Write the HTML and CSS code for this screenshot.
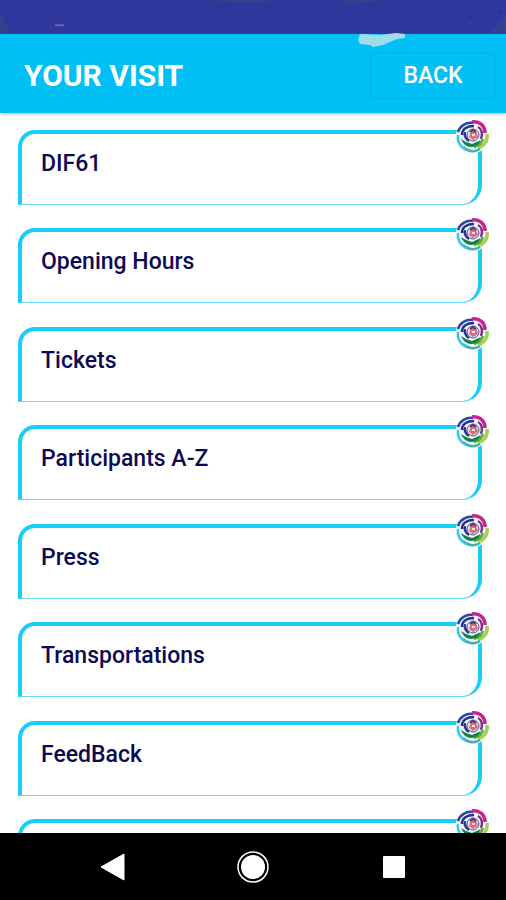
FILE: index.html
```html
<!DOCTYPE html>
<html lang="en">
<head>
<meta charset="utf-8">
<meta name="viewport" content="width=device-width, initial-scale=1">
<title>Your Visit</title>
<link rel="stylesheet" href="styles.css">
</head>
<body>
<svg class="symbols" aria-hidden="true">
  <symbol id="rose" viewBox="0 0 36 36">
    <circle cx="18" cy="18" r="16.500" fill="#f1f8fc"/>
    <g fill="none" stroke-width="2.500">
      <path d="M4 13C6 7 12 3 19 4" stroke="#2b4aa0"/>
      <path d="M18 3C25 2 31 6 31 14" stroke="#c8238f" stroke-width="3.500"/>
      <path d="M33 15C34 22 30 27 24 29" stroke="#a3d04e" stroke-width="3.500"/>
      <path d="M26 30C20 34 13 32 9 28" stroke="#45b0ab"/>
      <path d="M4 16C3 22 6 28 12 31" stroke="#38c8ef"/>
      <path d="M8 16C8 10 13 7 20 7" stroke="#25308f"/>
      <path d="M24 8C28 10 29 15 27 20" stroke="#80307f"/>
      <path d="M29 20C28 24 24 27 20 28" stroke="#5aa93a"/>
      <path d="M11 13C10 17 12 20 15 22" stroke="#313494"/>
    </g>
    <path d="M7 20L12 23 18 25 27 21C25 26 21 28 17 28S9 25 7 20Z" fill="#147f48"/>
    <circle cx="19" cy="16" r="6" fill="#dfe3f0" stroke="#535294" stroke-width="1"/>
    <path d="M15 18L17 12 22 12 24 18 19 21Z" fill="#dc6f78"/>
    <path d="M16 13L19 11 22 13" fill="none" stroke="#50356c" stroke-width="2"/>
    <path d="M18 16H21" stroke="#f5e9e7" stroke-width="2"/>
  </symbol>
</svg>
<div class="screen">
  <div class="status">
    <svg class="status-art" viewBox="0 0 506 34" preserveAspectRatio="none" aria-hidden="true">
      <path d="M0 12L10 34H0ZM200 0H280L250 3ZM340 0H386L345 5ZM506 15V34H490Z" fill="#35408f"/>
      <path d="M55 26H64" stroke="#65699f" stroke-width="2"/>
      <path d="M468 17H472M498 14L501 12" stroke="#283080" stroke-width="2"/>
    </svg>
  </div>
  <header class="bar">
    <svg class="smudge" viewBox="0 0 48 15" aria-hidden="true">
      <path d="M2 1L22 2 38 0 47 1V5L39 6 25 12 15 14 12 12 2 11 0 7Z" fill="#9edcec"/>
    </svg>
    <h1>YOUR VISIT</h1>
    <button class="back" type="button">BACK</button>
  </header>
  <main>
    <ul class="list">
      <li><a class="card" href="#dif61">DIF61<svg class="rose" aria-hidden="true"><use href="#rose"/></svg></a></li>
      <li><a class="card" href="#hours">Opening Hours<svg class="rose" aria-hidden="true"><use href="#rose"/></svg></a></li>
      <li><a class="card" href="#tickets">Tickets<svg class="rose" aria-hidden="true"><use href="#rose"/></svg></a></li>
      <li><a class="card" href="#participants">Participants A-Z<svg class="rose" aria-hidden="true"><use href="#rose"/></svg></a></li>
      <li><a class="card" href="#press">Press<svg class="rose" aria-hidden="true"><use href="#rose"/></svg></a></li>
      <li><a class="card" href="#transportations">Transportations<svg class="rose" aria-hidden="true"><use href="#rose"/></svg></a></li>
      <li><a class="card" href="#feedback">FeedBack<svg class="rose" aria-hidden="true"><use href="#rose"/></svg></a></li>
      <li class="peek"><div class="card"><svg class="rose" aria-hidden="true"><use href="#rose"/></svg></div></li>
    </ul>
  </main>
  <nav class="keys" aria-label="System">
    <button type="button" aria-label="Back"><svg viewBox="0 0 36 36"><path d="M6 18L29 5V31Z" fill="#fff" stroke="#fff" stroke-linejoin="round"/></svg></button>
    <button type="button" aria-label="Home"><svg viewBox="0 0 36 36"><circle cx="18" cy="18" r="15" fill="none" stroke="#fff" stroke-width="1.5"/><circle cx="18" cy="18" r="12" fill="#fff"/></svg></button>
    <button type="button" aria-label="Recent apps"><svg viewBox="0 0 36 36"><rect x="7" y="7" width="22" height="22" rx="1" fill="#fff"/></svg></button>
  </nav>
</div>
</body>
</html>
```
FILE: styles.css
```css
* {
  box-sizing: border-box;
}

body {
  margin: 0;
  background: #fff;
  color: #0d0a55;
  font-family: Roboto, "Liberation Sans", sans-serif;
}

.symbols {
  position: absolute;
  width: 0;
  height: 0;
}

.screen {
  display: flex;
  flex-direction: column;
  height: 100vh;
}

.status {
  flex: 0 0 34px;
  height: 34px;
  background: #30379c;
  border-bottom: 1px solid #1b4fae;
}

.status-art {
  display: block;
  width: 100%;
  height: 33px;
}

.bar {
  position: relative;
  z-index: 1;
  display: flex;
  flex: 0 0 79px;
  align-items: center;
  justify-content: space-between;
  padding: 4px 12px 0 24px;
  background: #02bff5;
  box-shadow: 0 1px 3px rgba(0, 0, 0, 0.3);
  color: #fff;
}

.smudge {
  position: absolute;
  top: -1px;
  right: 100px;
  width: 48px;
  height: 15px;
}

h1 {
  margin: 0;
  font-size: 30px;
  font-weight: 700;
  line-height: 36px;
}

.back {
  width: 122px;
  height: 43px;
  padding: 0;
  border: 0;
  border-radius: 2px;
  background: #02bff5;
  box-shadow: 0 0 3px rgba(0, 80, 130, 0.25);
  color: #fff;
  font: 500 23px/28px Roboto, "Liberation Sans", sans-serif;
}

main {
  display: flex;
  flex: 1;
  min-height: 0;
  padding: 17px 24px 0 18px;
  overflow: hidden;
}

.list {
  display: flex;
  flex: 1;
  flex-direction: column;
  margin: 0;
  padding: 0;
  list-style: none;
}

.list li {
  flex: 1;
}

.list .peek {
  flex: 0 0 14px;
  height: 14px;
  min-height: 0;
}

.card {
  position: relative;
  display: block;
  height: 75px;
  padding: 16px 19px;
  border: 4px solid #18cdf8;
  border-bottom: 1px solid #68d9f7;
  border-radius: 17px 17px 20px 0;
  color: inherit;
  font-size: 23px;
  font-weight: 500;
  line-height: 28px;
  text-decoration: none;
}

.rose {
  position: absolute;
  top: -15px;
  right: -12px;
  width: 36px;
  height: 36px;
}

.keys {
  position: relative;
  display: flex;
  flex: 0 0 67px;
  align-items: center;
  justify-content: space-evenly;
  background: #000;
}

.keys button {
  width: 36px;
  height: 36px;
  margin: 0 10px;
  padding: 0;
  border: 0;
  background: none;
}

.keys svg {
  display: block;
}
```
